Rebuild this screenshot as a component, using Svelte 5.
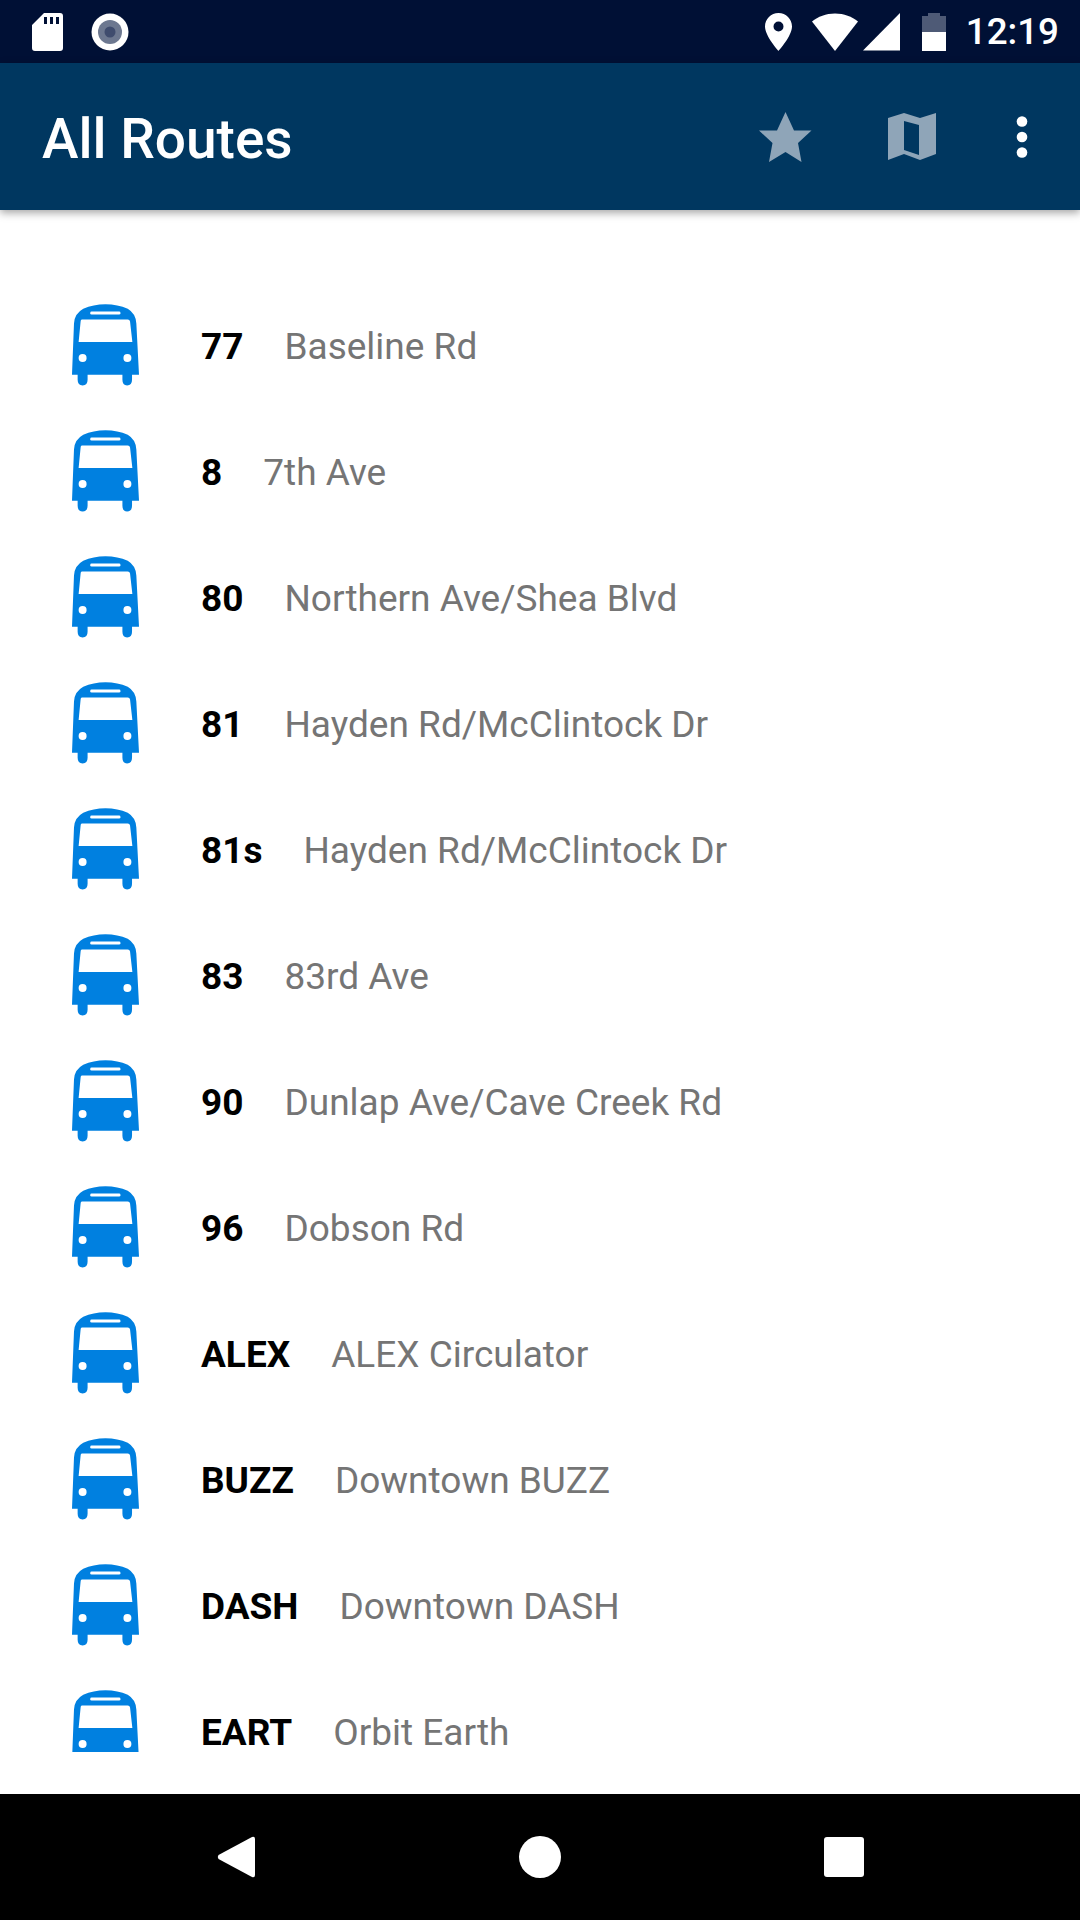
<script lang="ts">
  const routes = [
    { num: '77', name: 'Baseline Rd' },
    { num: '8', name: '7th Ave' },
    { num: '80', name: 'Northern Ave/Shea Blvd' },
    { num: '81', name: 'Hayden Rd/McClintock Dr' },
    { num: '81s', name: 'Hayden Rd/McClintock Dr' },
    { num: '83', name: '83rd Ave' },
    { num: '90', name: 'Dunlap Ave/Cave Creek Rd' },
    { num: '96', name: 'Dobson Rd' },
    { num: 'ALEX', name: 'ALEX Circulator' },
    { num: 'BUZZ', name: 'Downtown BUZZ' },
    { num: 'DASH', name: 'Downtown DASH' },
    { num: 'EART', name: 'Orbit Earth' }
  ];
</script>

<div class="screen">
  <div class="status-bar">
    <div class="status-left">
      <svg width="31" height="38" viewBox="0 0 31 38">
        <path fill-rule="evenodd" d="M12 0H28a3 3 0 0 1 3 3V35a3 3 0 0 1-3 3H3a3 3 0 0 1-3-3V12ZM12 4V11H15V4ZM18 4V11H21V4ZM24 4V11H27V4Z" fill="#fff"/>
      </svg>
      <svg width="38" height="38" viewBox="0 0 38 38">
        <circle cx="19" cy="19" r="18.500" fill="#fff"/>
        <circle cx="19" cy="19" r="12" fill="#6d7890"/>
        <circle cx="19" cy="19" r="5.500" fill="#3f4c6e"/>
      </svg>
    </div>
    <div class="status-right">
      <svg class="pin" width="27" height="38" viewBox="0 0 27 38">
        <path fill-rule="evenodd" d="M13.500 0C6 0 0 6 0 13.500C0 23 13.500 38 13.500 38S27 23 27 13.500C27 6 21 0 13.500 0ZM13.500 8.500a5 5 0 1 1 0 10a5 5 0 0 1 0-10Z" fill="#fff"/>
      </svg>
      <svg class="wifi" width="46" height="38" viewBox="0 0 46 38">
        <path d="M0 8.500C6 3.500 14 0.500 23 0.500S40 3.500 46 8.500L23 38Z" fill="#fff"/>
      </svg>
      <svg class="signal" width="37" height="38" viewBox="0 0 37 38">
        <path d="M37 0V37.500H0Z" fill="#fff"/>
      </svg>
      <svg class="battery" width="24" height="38" viewBox="0 0 24 38">
        <path d="M6 0H18V3H24V19H0V3H6Z" fill="#4e5a76"/>
        <rect x="0" y="19" width="24" height="19" fill="#fff"/>
      </svg>
      <span class="clock">12:19</span>
    </div>
  </div>

  <header class="app-bar">
    <h1>All Routes</h1>
    <div class="actions">
      <svg class="star" width="53" height="50" viewBox="0 0 53 50">
        <path d="M26.500 0L35 18.500L52.500 18.500L39 31L42.500 50L26.500 40L10 50L13.500 31L0 18.500L18 18.500Z" fill="#8fa5b8"/>
      </svg>
      <svg class="map" width="48" height="47" viewBox="0 0 48 47">
        <path fill-rule="evenodd" d="M16 0L32 5L48 0V41L32 47L16 41L0 47V5ZM16 8V37L31 42V12Z" fill="#8fa5b8"/>
      </svg>
      <svg class="more" width="12" height="42" viewBox="0 0 12 42">
        <circle cx="6" cy="5.500" r="5.300" fill="#fff"/>
        <circle cx="6" cy="21" r="5.300" fill="#fff"/>
        <circle cx="6" cy="36.500" r="5.300" fill="#fff"/>
      </svg>
    </div>
  </header>

  <main class="list">
    {#each routes as route}
      <div class="row">
        <svg class="bus" width="67" height="82" viewBox="66 42 202 246">
          <path d="M66 255L72 100Q74 70 100 56Q130 42 167 42Q204 42 234 56Q258 70 260 100L268 255H247V270Q247 287 232 287Q218 287 218 270V255H113V270Q113 287 98 287Q83 287 83 270V255Z" fill="#0080e0"/>
          <path d="M96 88H234Q240 88 241 94L248 156H86L92 94Q92 88 96 88Z" fill="#fff"/>
          <rect x="121" y="64" width="91" height="9" rx="4" fill="#fff"/>
          <circle cx="98" cy="204" r="12" fill="#fff"/>
          <circle cx="233" cy="204" r="12" fill="#fff"/>
        </svg>
        <span class="num">{route.num}</span>
        <span class="name">{route.name}</span>
      </div>
    {/each}
  </main>

  <nav class="nav-bar">
    <svg width="38" height="42" viewBox="0 0 38 42">
      <path d="M38 3V39Q38 42 35 41L1.500 23Q0 21 1.500 19L35 1Q38 0 38 3Z" fill="#fff"/>
    </svg>
    <svg width="42" height="42" viewBox="0 0 42 42">
      <circle cx="21" cy="21" r="21" fill="#fff"/>
    </svg>
    <svg width="40" height="40" viewBox="0 0 40 40">
      <rect width="40" height="40" rx="3" fill="#fff"/>
    </svg>
  </nav>
</div>

<style>
  :global(body) {
    margin: 0;
    background: #fff;
  }

  .screen {
    width: 1080px;
    height: 1920px;
    display: flex;
    flex-direction: column;
    background: #fff;
    font-family: Roboto, sans-serif;
    overflow: hidden;
  }

  .status-bar {
    height: 63px;
    flex: none;
    background: #001035;
    display: flex;
    align-items: center;
    justify-content: space-between;
    padding: 0 21px 0 32px;
  }

  .status-left {
    display: flex;
    align-items: center;
    gap: 28px;
  }

  .status-right {
    display: flex;
    align-items: center;
  }

  .wifi {
    margin-left: 20px;
  }

  .signal {
    margin-left: 5px;
  }

  .battery {
    margin-left: 22px;
  }

  .clock {
    margin-left: 20px;
    color: #fff;
    font-size: 36.75px;
    font-weight: 500;
    line-height: 38px;
  }

  .app-bar {
    height: 147px;
    flex: none;
    background: #003760;
    display: flex;
    align-items: center;
    justify-content: space-between;
    padding: 0 52px 0 42px;
    box-shadow: 0 3px 8px rgba(0, 0, 0, 0.35);
    position: relative;
    z-index: 1;
  }

  h1 {
    margin: 0;
    padding-top: 4px;
    color: #fff;
    font-size: 55px;
    font-weight: 500;
  }

  .actions {
    display: flex;
    align-items: center;
  }

  .map {
    margin-left: 76px;
  }

  .more {
    margin-left: 80px;
  }

  .list {
    flex: 1;
    min-height: 0;
    margin-bottom: 42px;
    padding-top: 72px;
    overflow: hidden;
    box-sizing: border-box;
  }

  .row {
    height: 126px;
    display: flex;
    align-items: center;
    padding-left: 72px;
    font-size: 37px;
  }

  .bus {
    flex: none;
    margin-right: 62px;
  }

  .num {
    color: #000;
    font-weight: 700;
    margin-right: 41px;
    padding-top: 2px;
  }

  .name {
    color: #757575;
    padding-top: 2px;
  }

  .nav-bar {
    height: 126px;
    flex: none;
    background: #000;
    display: flex;
    align-items: center;
    justify-content: space-between;
    padding: 0 216px 0 217px;
  }
</style>
